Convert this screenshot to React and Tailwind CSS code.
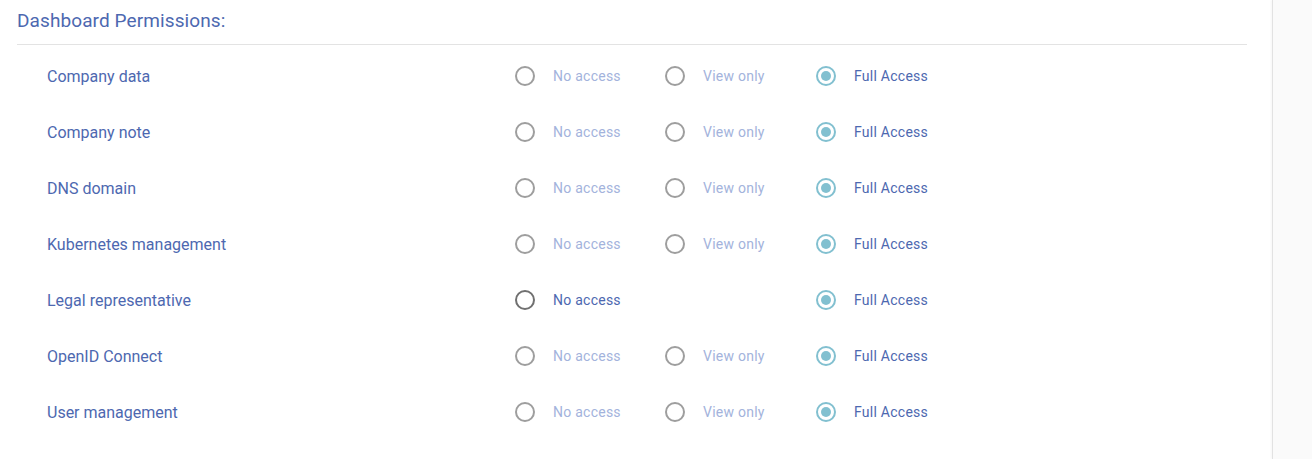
const permissions = [
  { name: 'Company data', viewOnly: true },
  { name: 'Company note', viewOnly: true },
  { name: 'DNS domain', viewOnly: true },
  { name: 'Kubernetes management', viewOnly: true },
  { name: 'Legal representative', viewOnly: false },
  { name: 'OpenID Connect', viewOnly: true },
  { name: 'User management', viewOnly: true },
];

// radio + label, estilo material
const Radio = ({ label, checked, muted, dark }) => (
  <div className="flex items-center gap-[18px]">
    <span
      className={`flex h-5 w-5 items-center justify-center rounded-full border-2 ${
        checked ? 'border-[#82c0d0]' : dark ? 'border-[#707070]' : 'border-[#9e9e9e]'
      }`}
    >
      {checked && <span className="h-[10px] w-[10px] rounded-full bg-[#82c0d0]" />}
    </span>
    <span className={`text-[14px] tracking-[0.25px] ${muted ? 'text-[#a3b3dc]' : 'text-[#4d68b0]'}`}>{label}</span>
  </div>
);

export default function App() {
  return (
    <div className="flex min-h-[459px] bg-white" style={{ fontFamily: 'Roboto, "Liberation Sans", sans-serif' }}>
      <div className="flex-1 pl-[17px] pr-[25px]">
        <div className="flex h-[45px] items-center border-b border-[#e3e3e3] pb-[1px]">
          <h2 className="text-[19px] tracking-[0.1px] text-[#4d68b0]">Dashboard Permissions:</h2>
        </div>
        <div className="pt-[3px]">
          {permissions.map((p) => (
            <div key={p.name} className="flex h-[56px] items-center">
              <div className="w-[498px] pl-[30px] pt-[1px] text-[16px] text-[#4d68b0]">{p.name}</div>
              <div className="w-[150px]">
                <Radio label="No access" muted={p.viewOnly} dark={!p.viewOnly} />
              </div>
              <div className="w-[151px]">
                {p.viewOnly && <Radio label="View only" muted />}
              </div>
              <div>
                <Radio label="Full Access" checked />
              </div>
            </div>
          ))}
        </div>
      </div>
      <div className="w-[40px] border-l border-[#e2e2e2] bg-[#fafafa] shadow-[-1px_0_2px_rgba(0,0,0,0.04)]" />
    </div>
  );
}
